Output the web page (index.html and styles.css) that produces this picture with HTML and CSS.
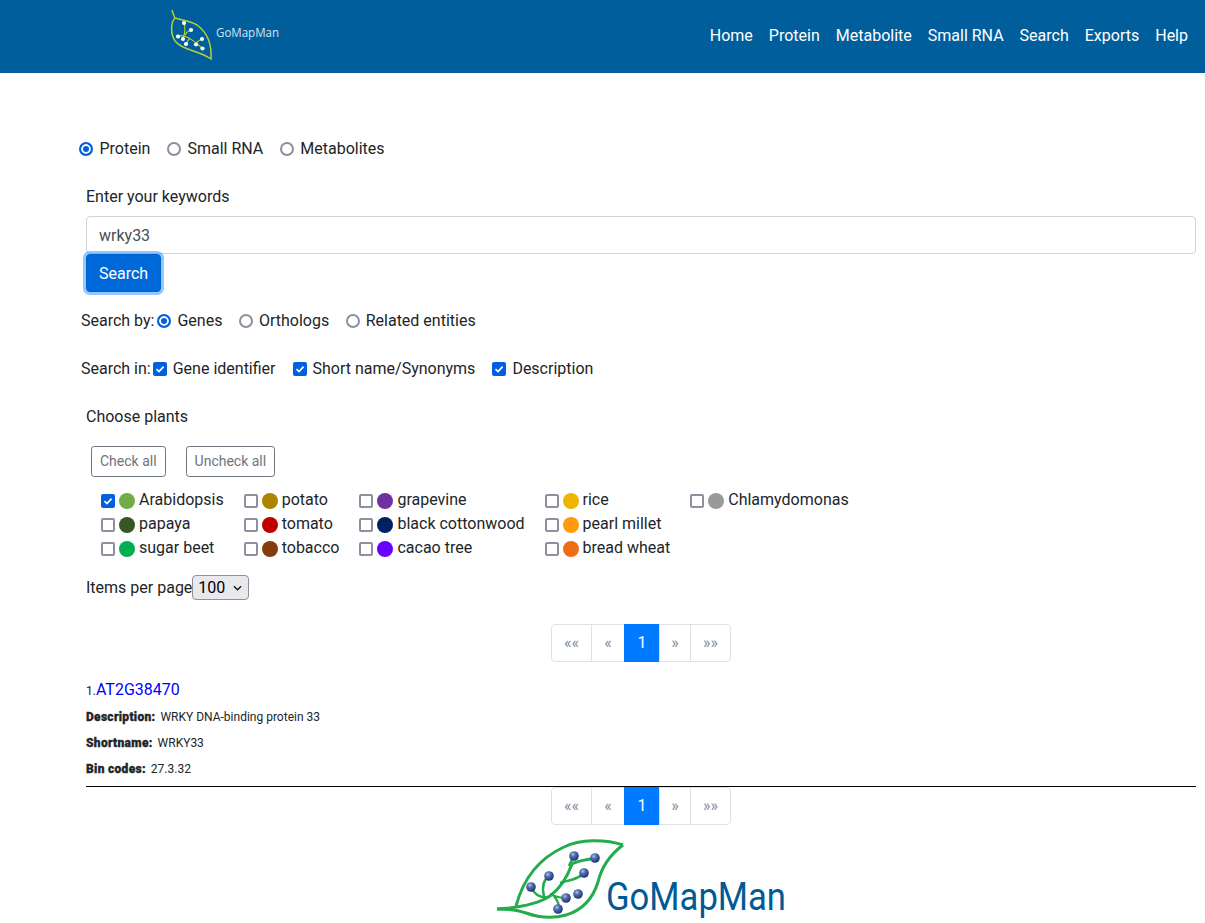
FILE: index.html
```html
<!DOCTYPE html>
<html lang="en">
<head>
<meta charset="utf-8">
<title>GoMapMan</title>
<link rel="stylesheet" href="styles.css">
</head>
<body>
<header class="topbar">
  <svg class="top-logo" viewBox="0 0 150 73" width="150" height="73" aria-label="GoMapMan logo">
    <g class="tl-lines">
      <path d="M22 10 C23 14 24 16 25 18 C21 22 20 33 25 41 C33 51 49 50 61 59 C62 44 58 33 47 25 C40 21 31 20 25 18"/>
      <path class="thin" d="M28 36 C36 34 44 41 52 48 M34 23 C36 29 35 33 33 39 M41 30 C38 31 36 33 35 35 M46 44 C47 42 49 40 52 39 M36 44 C37 42 38 40 40 38"/>
    </g>
    <g class="tl-nodes">
      <circle cx="34" cy="23" r="2.1"/><circle cx="41" cy="30" r="2.1"/><circle cx="28" cy="36.5" r="2.1"/><circle cx="33" cy="39" r="2.1"/>
      <circle cx="36" cy="44" r="2.1"/><circle cx="46" cy="44.5" r="2.1"/><circle cx="52" cy="39" r="2.1"/><circle cx="52.5" cy="48.5" r="2.1"/>
    </g>
    <text class="tl-text" x="66" y="37" textLength="63" lengthAdjust="spacingAndGlyphs">GoMapMan</text>
  </svg>
  <nav class="nav">
    <a href="#">Home</a><a href="#">Protein</a><a href="#">Metabolite</a><a href="#">Small RNA</a><a href="#">Search</a><a href="#">Exports</a><a href="#">Help</a>
  </nav>
</header>

<main class="page">
  <div class="row type-row">
    <label class="opt"><input type="radio" name="t" class="radio" checked>Protein</label>
    <label class="opt"><input type="radio" name="t" class="radio">Small RNA</label>
    <label class="opt"><input type="radio" name="t" class="radio">Metabolites</label>
  </div>

  <div class="inner">
    <div class="field-label">Enter your keywords</div>
    <input class="keyword" type="text" value="wrky33">
    <button class="search-btn" type="button">Search</button>
  </div>

  <div class="row by-row">
    <span class="row-title">Search by:</span>
    <label class="opt"><input type="radio" name="b" class="radio" checked>Genes</label>
    <label class="opt"><input type="radio" name="b" class="radio">Orthologs</label>
    <label class="opt"><input type="radio" name="b" class="radio">Related entities</label>
  </div>

  <div class="row in-row">
    <span class="row-title">Search in:</span>
    <label class="opt"><input type="checkbox" class="check" checked>Gene identifier</label>
    <label class="opt"><input type="checkbox" class="check" checked>Short name/Synonyms</label>
    <label class="opt"><input type="checkbox" class="check" checked>Description</label>
  </div>

  <div class="inner">
    <div class="choose">Choose plants</div>
    <div class="check-btns">
      <button class="outline-btn" type="button">Check all</button>
      <button class="outline-btn" type="button">Uncheck all</button>
    </div>
    <div class="plants">
      <div class="plant-col">
        <label class="plant"><input type="checkbox" class="check" checked><i class="dot c-arab"></i>Arabidopsis</label>
        <label class="plant"><input type="checkbox" class="check"><i class="dot c-papaya"></i>papaya</label>
        <label class="plant"><input type="checkbox" class="check"><i class="dot c-beet"></i>sugar beet</label>
      </div>
      <div class="plant-col">
        <label class="plant"><input type="checkbox" class="check"><i class="dot c-potato"></i>potato</label>
        <label class="plant"><input type="checkbox" class="check"><i class="dot c-tomato"></i>tomato</label>
        <label class="plant"><input type="checkbox" class="check"><i class="dot c-tobacco"></i>tobacco</label>
      </div>
      <div class="plant-col">
        <label class="plant"><input type="checkbox" class="check"><i class="dot c-grape"></i>grapevine</label>
        <label class="plant"><input type="checkbox" class="check"><i class="dot c-cotton"></i>black cottonwood</label>
        <label class="plant"><input type="checkbox" class="check"><i class="dot c-cacao"></i>cacao tree</label>
      </div>
      <div class="plant-col">
        <label class="plant"><input type="checkbox" class="check"><i class="dot c-rice"></i>rice</label>
        <label class="plant"><input type="checkbox" class="check"><i class="dot c-millet"></i>pearl millet</label>
        <label class="plant"><input type="checkbox" class="check"><i class="dot c-wheat"></i>bread wheat</label>
      </div>
      <div class="plant-col">
        <label class="plant"><input type="checkbox" class="check"><i class="dot c-chlamy"></i>Chlamydomonas</label>
      </div>
    </div>

    <div class="per-page">
      <span>Items per page</span>
      <select class="per-select"><option>100</option></select>
    </div>

    <div class="pager first-pager">
      <a href="#" class="pg pg-a">««</a><a href="#" class="pg pg-b">«</a><a href="#" class="pg pg-active">1</a><a href="#" class="pg pg-c">»</a><a href="#" class="pg pg-d">»»</a>
    </div>

    <div class="result-title"><span class="idx">1.</span><a href="#" class="gene">AT2G38470</a></div>
    <div class="meta"><b>Description:</b> WRKY DNA-binding protein 33</div>
    <div class="meta"><b>Shortname:</b> WRKY33</div>
    <div class="meta"><b>Bin codes:</b> 27.3.32</div>
    <hr class="rule">

    <div class="pager">
      <a href="#" class="pg pg-a">««</a><a href="#" class="pg pg-b">«</a><a href="#" class="pg pg-active">1</a><a href="#" class="pg pg-c">»</a><a href="#" class="pg pg-d">»»</a>
    </div>

    <svg class="foot-logo" viewBox="6 10 310 83" width="310" height="83" aria-label="GoMapMan logo">
      <defs>
        <radialGradient id="ball" cx="38%" cy="32%" r="70%">
          <stop offset="0" stop-color="#b9c8e6"/><stop offset=".35" stop-color="#5570b4"/><stop offset="1" stop-color="#1c2f6e"/>
        </radialGradient>
      </defs>
      <g class="fl-lines">
        <path d="M143 15 C125 9 100 9 84 17 C62 27 44 46 36 76"/>
        <path d="M143 15 C131 24 122 35 118 52 C113 68 103 80 86 85 C72 89 60 88 46 83 C38 80 32 79 17 79"/>
        <path d="M17 79 C36 78 56 75 70 66 C82 57 88 45 92 34 C96 31 106 30 115 28"/>
      </g>
      <g class="fl-veins">
        <path d="M51 57 C55 66 62 68 69 67 M69 46 C62 51 62 58 64 66 M104 43 C99 49 90 50 80 53 M94 26 C92 30 90 33 89 36 M86 68 C80 68 76 67 70 64 M78 79 C80 75 78 71 74 66"/>
      </g>
      <g fill="url(#ball)">
        <circle cx="94" cy="26" r="4.8"/><circle cx="115" cy="28" r="4.8"/><circle cx="104" cy="43" r="4.8"/><circle cx="69" cy="46" r="4.8"/>
        <circle cx="51" cy="57" r="4.8"/><circle cx="98" cy="64" r="4.8"/><circle cx="86" cy="68" r="4.8"/><circle cx="78" cy="79" r="4.8"/>
      </g>
      <text class="fl-text" x="126" y="80" textLength="180" lengthAdjust="spacingAndGlyphs">GoMapMan</text>
    </svg>
  </div>
</main>
</body>
</html>
```

FILE: styles.css
```css
* { box-sizing: border-box; }

html, body { margin: 0; padding: 0; }

body {
  font-family: Roboto, "Liberation Sans", sans-serif;
  font-size: 16px;
  line-height: 24px;
  color: #212529;
  background: #fff;
}

.topbar {
  height: 73px;
  background: #005e9c;
  display: flex;
  justify-content: space-between;
  padding: 0 9px 0 150px;
}

.top-logo { display: block; }
.tl-lines path { fill: none; stroke: #b4cf3a; stroke-width: 1.5; }
.tl-lines path.thin { stroke-width: 1.1; }
.tl-nodes circle { fill: #fff; }
.tl-text { font-family: "Open Sans", Roboto, sans-serif; font-size: 12px; fill: #d3e4f1; }

.nav { display: flex; align-items: center; padding-bottom: 1px; }
.nav a { color: #fff; text-decoration: none; padding: 0 8px; }

.page { padding: 0 9px 0 79px; }

.row { display: flex; align-items: center; height: 24px; }

.type-row { margin-top: 64px; gap: 16.5px; }
.by-row { margin-top: 17px; margin-left: 2px; }
.in-row { margin-top: 24px; margin-left: 2px; }
.by-row .row-title { margin-right: 3px; }
.in-row .row-title { margin-right: 2px; }
.by-row .opt + .opt { margin-left: 16.5px; }
.in-row .opt + .opt { margin-left: 17px; }

.opt { display: flex; align-items: center; }

.radio, .check {
  appearance: none;
  -webkit-appearance: none;
  width: 14px;
  height: 14px;
  margin: 0;
  flex: none;
  border: 2px solid #8f8f9d;
  background: #fff;
}

.opt .radio, .opt .check { margin-right: 6px; }
.type-row .opt .radio { margin-right: 6.5px; }

.radio { border-radius: 50%; }
.radio:checked { border-color: #0060df; box-shadow: inset 0 0 0 2px #fff; background: #0060df; }

.check { border-radius: 2px; }
.check:checked {
  border-color: #0060df;
  background: #0060df url("data:image/svg+xml,%3Csvg xmlns='http://www.w3.org/2000/svg' viewBox='0 0 10 10'%3E%3Cpath d='M1.5 5.2 4 7.6 8.6 2.6' fill='none' stroke='%23fff' stroke-width='1.7'/%3E%3C/svg%3E") center / 10px 10px no-repeat;
}

.inner { margin-left: 7px; }

.field-label { margin-top: 24px; }

.keyword {
  display: block;
  width: 100%;
  height: 38px;
  margin-top: 7px;
  padding: 6px 12px;
  font: inherit;
  color: #495057;
  background: #fff;
  border: 1px solid #ced4da;
  border-radius: 4px;
}

.search-btn {
  display: block;
  height: 38px;
  padding: 1px 12px 0;
  font: inherit;
  color: #fff;
  background: #0069d9;
  border: 1px solid #0062cc;
  border-radius: 4px;
  box-shadow: 0 0 0 3px rgba(38, 143, 255, .5);
}

.choose { margin-top: 24px; }

.check-btns { display: flex; gap: 20px; margin: 17px 0 0 5px; }

.outline-btn {
  height: 31px;
  padding: 0 8px 2px;
  font: inherit;
  font-size: 14px;
  color: #6c757d;
  background: #fff;
  border: 1px solid #6c757d;
  border-radius: 3.2px;
}

.plants { display: flex; gap: 20px; margin: 12px 0 0 15px; }

.plant { display: flex; align-items: center; height: 24px; padding-bottom: 2px; }
.plant .check { margin: 2px 4px 0 0; }

.dot { width: 16px; height: 16px; border-radius: 50%; margin: 2px 4px 0 0; flex: none; }
.c-arab { background: #70ad47; }
.c-papaya { background: #375623; }
.c-beet { background: #00b050; }
.c-potato { background: #ad8400; }
.c-tomato { background: #c00000; }
.c-tobacco { background: #843c0c; }
.c-grape { background: #7030a0; }
.c-cotton { background: #002060; }
.c-cacao { background: #6600ff; }
.c-rice { background: #eeb600; }
.c-millet { background: #ff9a0a; }
.c-wheat { background: #ed6d16; }
.c-chlamy { background: #999; }

.per-page { display: flex; align-items: center; height: 25px; margin-top: 14px; }

.per-select {
  appearance: none;
  -webkit-appearance: none;
  width: 57px;
  height: 25px;
  padding: 0 0 0 5px;
  font: inherit;
  color: #000;
  border: 1px solid #8f8f9d;
  border-radius: 4px;
  background: #e9e9ed url("data:image/svg+xml,%3Csvg xmlns='http://www.w3.org/2000/svg' viewBox='0 0 10 6'%3E%3Cpath d='M1 1 5 5 9 1' fill='none' stroke='%23111' stroke-width='1.4'/%3E%3C/svg%3E") right 6px center / 9px 6px no-repeat;
}

.pager { display: flex; justify-content: center; height: 38px; }
.first-pager { margin-top: 24px; }

.pg {
  display: flex;
  align-items: center;
  justify-content: center;
  height: 38px;
  font-size: 16px;
  color: #7c8ba0;
  text-decoration: none;
  background: #fff;
  border: 1px solid #dee2e6;
  margin-left: -1px;
}
.pg-a { width: 41px; border-radius: 4px 0 0 4px; margin-left: 0; }
.pg-b { width: 34px; }
.pg-active { width: 36px; color: #fff; background: #007bff; border-color: #007bff; }
.pg-c { width: 32px; }
.pg-d { width: 41px; border-radius: 0 4px 4px 0; }

.result-title { height: 24px; margin-top: 16px; }
.idx { font-size: 12px; }
.gene { color: #00f; text-decoration: none; }

.meta { height: 26px; line-height: 26px; font-size: 12px; color: #212529; }
.meta b { font-weight: 900; letter-spacing: .3px; margin-right: 2px; -webkit-text-stroke: .3px #212529; }
.result-title + .meta { margin-top: 2px; }

.rule { height: 1px; margin: 4px 0 0; border: 0; background: #000; }

.foot-logo { display: block; margin: 15px auto 0; overflow: visible; }
.fl-lines path { fill: none; stroke: #22ac4b; stroke-width: 3; }
.fl-veins path { fill: none; stroke: #22ac4b; stroke-width: 2.4; }
.fl-text { font-family: Roboto, "Open Sans", sans-serif; font-size: 38px; fill: #005a96; }
```
